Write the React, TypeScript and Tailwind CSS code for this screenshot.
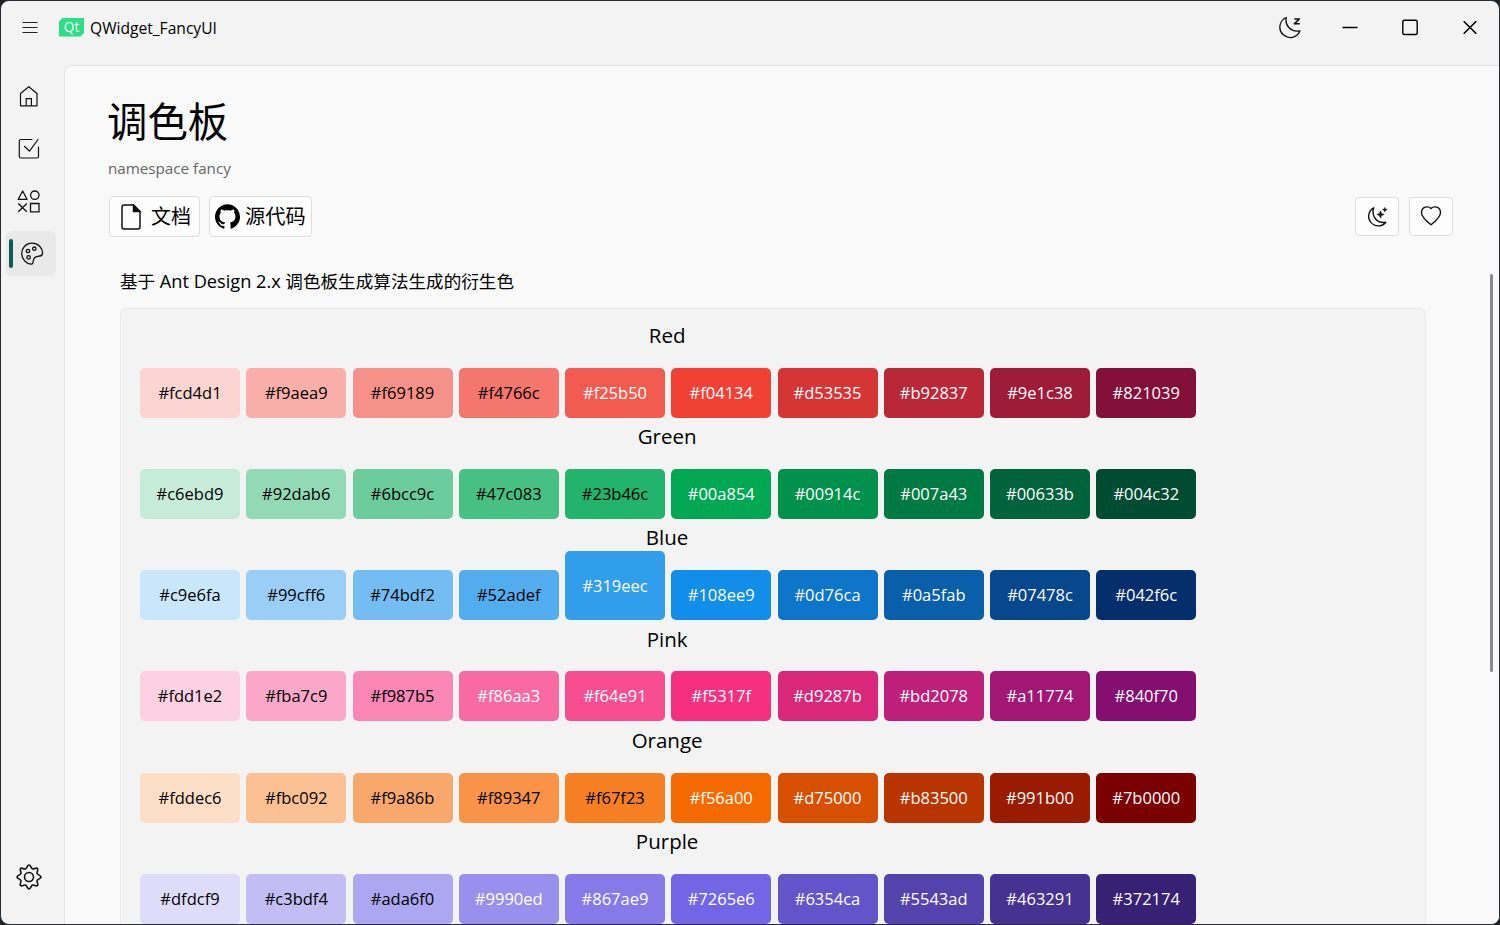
import React from 'react';
import { SiGithub } from 'react-icons/si';

const palettes = [
  {
    name: 'Red',
    dark: 4,
    colors: ['#fcd4d1', '#f9aea9', '#f69189', '#f4766c', '#f25b50', '#f04134', '#d53535', '#b92837', '#9e1c38', '#821039']
  },
  {
    name: 'Green',
    dark: 5,
    colors: ['#c6ebd9', '#92dab6', '#6bcc9c', '#47c083', '#23b46c', '#00a854', '#00914c', '#007a43', '#00633b', '#004c32']
  },
  {
    name: 'Blue',
    dark: 4,
    active: 4,
    colors: ['#c9e6fa', '#99cff6', '#74bdf2', '#52adef', '#319eec', '#108ee9', '#0d76ca', '#0a5fab', '#07478c', '#042f6c']
  },
  {
    name: 'Pink',
    dark: 3,
    colors: ['#fdd1e2', '#fba7c9', '#f987b5', '#f86aa3', '#f64e91', '#f5317f', '#d9287b', '#bd2078', '#a11774', '#840f70']
  },
  {
    name: 'Orange',
    dark: 5,
    colors: ['#fddec6', '#fbc092', '#f9a86b', '#f89347', '#f67f23', '#f56a00', '#d75000', '#b83500', '#991b00', '#7b0000']
  },
  {
    name: 'Purple',
    dark: 3,
    colors: ['#dfdcf9', '#c3bdf4', '#ada6f0', '#9990ed', '#867ae9', '#7265e6', '#6354ca', '#5543ad', '#463291', '#372174']
  }
];

function HomeIcon() {
  return (
    <svg width="24" height="24" viewBox="0 0 24 24" fill="none" stroke="#111" strokeWidth="1.2">
      <path d="M3.500 21.800V9.500L11.800 2.800l8.200 6.700v12.300z" strokeLinejoin="round" />
      <path d="M9.200 21.500v-6.800h5.200v6.800" />
    </svg>
  );
}

function CheckIcon() {
  return (
    <svg width="24" height="24" viewBox="0 0 24 24" fill="none" stroke="#111" strokeWidth="1.2" strokeLinecap="round">
      <path d="M15 3.500H3.800A1.500 1.500 0 0 0 2.300 5v15.500A1.500 1.500 0 0 0 3.800 22h16.200a1.500 1.500 0 0 0 1.500-1.500V11" />
      <path d="M7.500 10.500l5 4.500 8.500-11.500" />
    </svg>
  );
}

function ShapesIcon() {
  return (
    <svg width="24" height="24" viewBox="0 0 24 24" fill="none" stroke="#111" strokeWidth="1.3" strokeLinejoin="round">
      <path d="M5.700 2L10 10.300H1.200z" />
      <circle cx="17.800" cy="6.200" r="4.200" />
      <path d="M1.300 14.500l8.500 8.300M9.800 14.500l-8.500 8.300" />
      <path d="M13.500 14.500H22v8.300h-8.500z" strokeLinejoin="miter" />
    </svg>
  );
}

function PaletteIcon() {
  return (
    <svg width="24" height="24" viewBox="0 0 24 24" fill="none" stroke="#111" strokeWidth="1.3" strokeLinejoin="round">
      <path d="M12 1.200C6 1.200 1.700 6 1.700 11.500c0 5.500 4.600 10.700 9.800 10.700 1.700 0 1.500-1.500 1.700-3.200.4-3 1.500-4.200 4.500-4.600 3-.4 4.900-.6 4.900-3.300C22.600 6 18.200 1.200 12 1.200z" />
      <circle cx="8" cy="9" r="1.700" />
      <circle cx="14.300" cy="6.700" r="1.700" />
      <circle cx="8.600" cy="15.400" r="1.700" />
    </svg>
  );
}

function GearIcon() {
  return (
    <svg width="28" height="28" viewBox="0 0 28 28" fill="none" stroke="#111" strokeWidth="1.600" strokeLinejoin="round">
      <path d="M14 2c1.800 0 1.800 3.200 3.500 3.900 1.700.7 3.700-1.700 5-.4s-1.100 3.300-.4 5S26 12.200 26 14s-3.200 1.800-3.900 3.500 1.700 3.700.4 5-3.300-1.100-5-.4S15.800 26 14 26s-1.800-3.200-3.500-3.900-3.700 1.700-5 .4 1.100-3.300.4-5S2 15.800 2 14s3.200-1.800 3.900-3.500-1.700-3.700-.4-5 3.300 1.100 5 .4S12.200 2 14 2z" />
      <circle cx="14" cy="14" r="4.500" />
    </svg>
  );
}

function MoonSleepIcon() {
  return (
    <svg width="24" height="24" viewBox="0 0 24 24" fill="none" stroke="#111" strokeWidth="1.300" strokeLinejoin="round">
      <path d="M8.300 2.500A10.400 10.400 0 1 0 22 15.800C13.500 17.500 6.500 11 8.300 2.500z" />
      <path d="M16.300 4h5l-5 4.800h5.500" strokeWidth="1.600" />
    </svg>
  );
}

function MoonStarsIcon() {
  return (
    <svg width="24" height="24" viewBox="0 0 24 24" fill="none" stroke="#111" strokeWidth="1.400" strokeLinejoin="round">
      <path d="M8.700 2.800A9.600 9.600 0 1 0 20.800 17.200C12.500 19 6 11.500 8.700 2.800z" />
      <path d="M15.500 5.800l1.100 2.600 2.600 1.100-2.600 1.100-1.100 2.600-1.100-2.600-2.600-1.100 2.600-1.100z" fill="#111" strokeWidth=".5" />
      <path d="M19.800 2.300l.7 1.700 1.700.7-1.700.7-.7 1.700-.7-1.700-1.700-.7 1.700-.7z" fill="#111" strokeWidth=".4" />
    </svg>
  );
}

function TitleBar() {
  return (
    <header className="h-16 flex items-start">
      <svg className="mt-[18px] ml-5" width="18" height="18" viewBox="0 0 18 18" stroke="#222" strokeWidth="1">
        <path d="M1.500 3.500h15M1.500 8.500h15M1.500 13.500h15" />
      </svg>
      <svg className="mt-[17px] ml-5" width="25" height="19" viewBox="0 0 25 19">
        <path d="M3.500 0H25v15l-3.500 3.500H0V3.500z" fill="#2cde85" />
        <text x="12.600" y="14" textAnchor="middle" fontSize="14.500" fill="#fff" fontFamily="Open Sans, sans-serif" fontWeight="500" textLength="15.500" lengthAdjust="spacingAndGlyphs">Qt</text>
      </svg>
      <h1 className="mt-[15px] ml-1.5 text-[15.600px] leading-6 whitespace-nowrap">QWidget_FancyUI</h1>
      <div className="ml-auto -mr-px flex items-center h-[52px]">
        <div className="w-[60px] flex justify-center"><MoonSleepIcon /></div>
        <svg width="60" height="24" stroke="#000" strokeWidth="1.300"><path d="M22.500 12.500h15" /></svg>
        <svg width="60" height="24" fill="none" stroke="#000" strokeWidth="1.400">
          <rect x="22.800" y="5.300" width="14.400" height="14.200" rx="1.500" />
        </svg>
        <svg width="60" height="24" stroke="#000" strokeWidth="1.600"><path d="M23.700 6.200l12.600 12.600M36.300 6.200L23.700 18.800" /></svg>
      </div>
    </header>
  );
}

function Sidebar() {
  return (
    <nav className="w-[63px] shrink-0 flex flex-col">
      <div className="h-[52px] mt-[5px] pl-[16px] flex items-center"><HomeIcon /></div>
      <div className="h-[52px] pl-[16px] flex items-center"><CheckIcon /></div>
      <div className="h-[53px] pl-[16px] flex items-center"><ShapesIcon /></div>
      <div className="h-[45px] mt-[4px] ml-[5px] w-[50px] flex items-center rounded-md bg-[#e9e9e9]">
        <div className="ml-[3px] w-1 h-[29px] rounded-full bg-[#0f5a52]" />
        <div className="ml-[7px]"><PaletteIcon /></div>
      </div>
      <div className="mt-auto mb-[33px] pl-[13.500px]"><GearIcon /></div>
    </nav>
  );
}

const button = 'flex items-center rounded-[4px] border-[1.500px] border-[#dedede] bg-[#fdfdfd]';

function PageHeader() {
  return (
    <div className="pl-[43px] pr-[46px]">
      <h2 className="mt-[28px] -ml-px text-[40.400px] leading-[56px]">调色板</h2>
      <p className="mt-[6px] text-[15.200px] leading-6 text-[#666]">namespace fancy</p>
      <div className="mt-4 ml-px flex items-center">
        <button className={`${button} h-[41px] w-[91px] pl-[10px] text-[20px]`}>
          <svg width="22" height="26" viewBox="0 0 22 26" fill="none" stroke="#111" strokeWidth="1.500">
            <path d="M13.500 1H4a2 2 0 0 0-2 2v20a2 2 0 0 0 2 2h14a2 2 0 0 0 2-2V7.500z" strokeLinejoin="round" />
            <path d="M13.500 1v6.500H20z" fill="#111" />
          </svg>
          <span className="ml-[9px]">文档</span>
        </button>
        <button className={`${button} ml-[9px] h-[41px] w-[103px] pl-[5px] text-[20.200px]`}>
          <SiGithub size={25} />
          <span className="ml-[5px] whitespace-nowrap">源代码</span>
        </button>
        <button className={`${button} ml-auto h-[39px] w-[44px] justify-center`}><MoonStarsIcon /></button>
        <button className={`${button} ml-[10px] h-[39px] w-[44px] justify-center`}>
          <svg className="-mt-0.5" width="22" height="20" viewBox="0 0 22 20" fill="none" stroke="#111" strokeWidth="1.400" strokeLinejoin="round">
            <path d="M11 2.500C8.500-.2 1.500.3 1.500 6.700c0 4.600 5 8.500 9.500 12 4.500-3.500 9.500-7.400 9.500-12C20.500.3 13.500-.2 11 2.500z" />
          </svg>
        </button>
      </div>
    </div>
  );
}

function PaletteCard() {
  return (
    <div className="ml-[55px] mt-[13px] w-[1306px] h-[720px] rounded-md border border-[#e9e9e9] bg-[#f3f3f3] pl-[19px] pt-[8.500px]">
      <div className="w-[1056.250px]">
        {palettes.map((palette) => (
          <section key={palette.name} className="h-[101.250px]">
            <h3 className="h-[50px] pt-[1.400px] pr-[2px] text-center text-[20.500px] leading-8">{palette.name}</h3>
            <div className="flex h-[50px] items-end gap-[6.250px]">
              {palette.colors.map((color, i) => (
                <div
                  key={color}
                  className={`w-[100px] shrink-0 flex items-center justify-center rounded-[5px] pt-px text-[16.500px] ${
                    palette.active === i ? 'h-[69px]' : 'h-[50px]'
                  } ${i < palette.dark ? 'text-black' : 'text-white'}`}
                  style={{ backgroundColor: color }}
                >
                  {color}
                </div>
              ))}
            </div>
          </section>
        ))}
      </div>
    </div>
  );
}

export default function App() {
  return (
    <div className="h-[925px] w-[1500px] overflow-hidden bg-[#1d2328] font-['Open_Sans','Noto_Sans_CJK_SC',sans-serif] text-black">
      <div className="flex h-full w-full flex-col overflow-hidden rounded-[9px] border border-[#2b2c30] bg-[#f3f3f3]">
        <TitleBar />
        <div className="flex min-h-0 flex-1">
          <Sidebar />
          <main className="relative min-w-0 flex-1 overflow-hidden rounded-tl-[7px] border-t border-l border-[#e3e3e3] bg-[#f9f9f9]">
            <PageHeader />
            <p className="ml-[55px] mt-[30px] text-[17.600px] leading-[28px]">
              基于 <span className="text-[18.200px]">Ant Design 2.x</span> 调色板生成算法生成的衍生色
            </p>
            <PaletteCard />
            <div className="absolute right-[6px] top-[208px] h-[398px] w-[3px] rounded-full bg-[#8a8a8a]" />
          </main>
        </div>
      </div>
    </div>
  );
}
